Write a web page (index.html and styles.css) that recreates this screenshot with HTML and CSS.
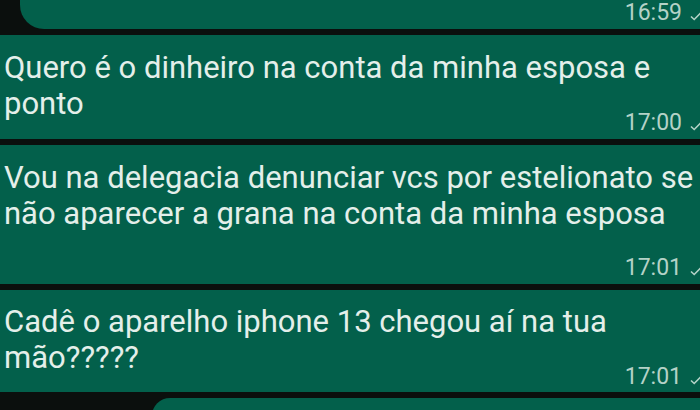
FILE: index.html
```html
<!DOCTYPE html>
<html lang="pt">
<head>
<meta charset="utf-8">
<link rel="stylesheet" href="styles.css">
</head>
<body>
<div class="chat">
  <div class="msg msg-top">
    <div class="meta"><span class="time">16:59</span><svg class="tick" viewBox="0 0 12 10"><path d="M1 5.5 L4.2 8.5 L11 1.5"/></svg></div>
  </div>
  <div class="msg">
    <p class="text">Quero é o dinheiro na conta da minha esposa e<br>ponto</p>
    <div class="meta meta-inline"><span class="time">17:00</span><svg class="tick" viewBox="0 0 12 10"><path d="M1 5.5 L4.2 8.5 L11 1.5"/></svg></div>
  </div>
  <div class="msg">
    <p class="text">Vou na delegacia denunciar vcs por estelionato se<br>não aparecer a grana na conta da minha esposa</p>
    <div class="meta meta-below"><span class="time">17:01</span><svg class="tick" viewBox="0 0 12 10"><path d="M1 5.5 L4.2 8.5 L11 1.5"/></svg></div>
  </div>
  <div class="msg msg-short">
    <p class="text">Cadê o aparelho iphone 13 chegou aí na tua<br>mão?????</p>
    <div class="meta meta-inline"><span class="time">17:01</span><svg class="tick" viewBox="0 0 12 10"><path d="M1 5.5 L4.2 8.5 L11 1.5"/></svg></div>
  </div>
  <div class="msg msg-next"></div>
</div>
</body>
</html>
```

FILE: styles.css
```css
* { box-sizing: border-box; }
html, body {
  margin: 0;
  padding: 0;
  width: 700px;
  height: 410px;
  overflow: hidden;
  background: #0b0f0d;
}
.chat {
  display: flex;
  flex-direction: column;
  gap: 6px;
  font-family: Roboto, "Noto Sans", sans-serif;
  color: #e4efea;
}
.msg {
  background: #03604b;
  padding: 15px 0 5px 4px;
}
.msg-short { padding-top: 14px; padding-bottom: 4px; }
.msg-top {
  margin-left: 20px;
  height: 29px;
  padding: 0;
  border-bottom-left-radius: 24px;
}
.text {
  margin: 0;
  font-size: 31px;
  line-height: 36px;
  white-space: nowrap;
}
.meta {
  display: flex;
  justify-content: flex-end;
  align-items: center;
  height: 24px;
  gap: 8px;
  margin-right: -2px;
}
.meta-inline { margin-top: -12px; }
.meta-below { margin-top: 23px; }
.time {
  font-size: 23px;
  line-height: 1;
  color: #b4d2c7;
}
.tick {
  width: 12px;
  height: 10px;
  margin-top: 7px;
  fill: none;
  stroke: #b4d2c7;
  stroke-width: 1.6;
}
.msg-next {
  margin-left: 152px;
  height: 20px;
  padding: 0;
  border-top-left-radius: 18px;
}
```
